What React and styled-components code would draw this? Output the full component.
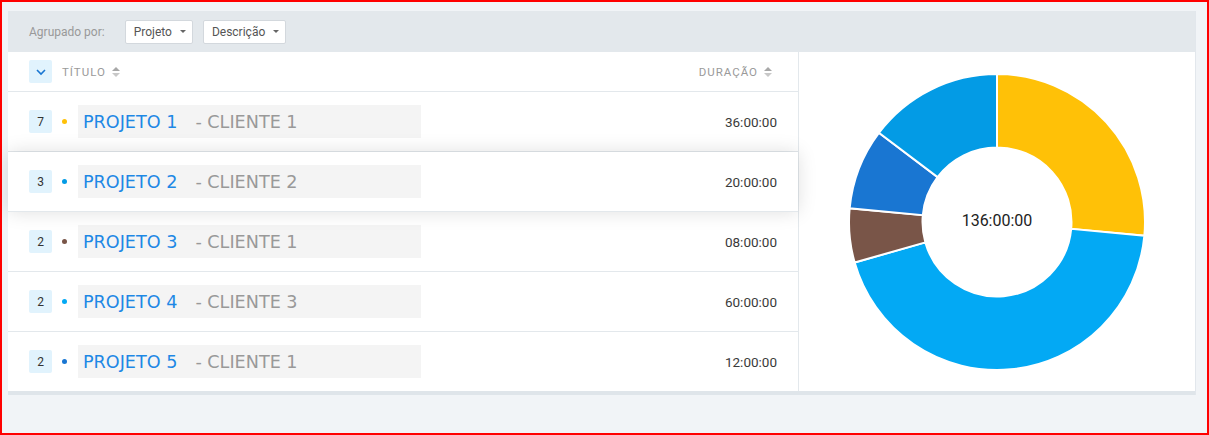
import React from 'react'
import styled, { createGlobalStyle } from 'styled-components'

const GlobalStyle = createGlobalStyle`
    html, body {
        margin: 0;
        padding: 0;
        background: #f1f4f7;
    }
    * { box-sizing: border-box; }
`;

const Frame = styled.div`
    width: 1209px;
    height: 435px;
    border: 2px solid #ff0000;
    background: #f1f4f7;
    padding: 9px 12px 0 6px;
    font-family: Roboto, "Liberation Sans", sans-serif;
`;

const Panel = styled.div`
    background: #fff;
    border-bottom: 4px solid #dfe5ea;
    box-shadow: 1px 0 0 #e2e7ec;
`;

const Toolbar = styled.div`
    height: 41px;
    background: #e3e8ec;
    display: flex;
    align-items: center;
    padding-left: 21px;
    gap: 10px;
`;

const Label = styled.span`
    font-size: 12px;
    color: #999;
    margin-right: 10px;
`;

const Select = styled.button`
    height: 24px;
    display: flex;
    align-items: center;
    gap: 8px;
    padding: 0 6px 0 8px;
    background: #fff;
    border: 1px solid #d3d8dd;
    border-radius: 2px;
    font-family: Roboto, "Liberation Sans", sans-serif;
    font-size: 12px;
    color: #555;
`;

const Caret = styled.span`
    width: 0;
    height: 0;
    border-left: 3px solid transparent;
    border-right: 3px solid transparent;
    border-top: 3px solid #666;
`;

const Body = styled.div`
    display: flex;
`;

const Table = styled.div`
    width: 791px;
    border-right: 1px solid #e3e8ec;
`;

const HeadRow = styled.div`
    height: 40px;
    display: flex;
    align-items: center;
    padding: 0 26px 0 21px;
    border-bottom: 1px solid #e3e8ec;
`;

const Square = styled.div`
    width: 23px;
    height: 23px;
    border-radius: 2px;
    background: #e1f3fd;
    display: flex;
    align-items: center;
    justify-content: center;
    font-size: 12px;
    color: #333;
    flex-shrink: 0;
`;

const ColTitle = styled.span`
    display: flex;
    align-items: center;
    gap: 6px;
    font-size: 11.5px;
    letter-spacing: 1px;
    color: #9a9a9a;
    margin-left: ${p => p.$left ? '10px' : 'auto'};
`;

const Row = styled.div`
    height: 60px;
    display: flex;
    align-items: center;
    padding: 0 21px;
    border-bottom: 1px solid #e3e8ec;
    background: #fff;
    position: relative;
    z-index: ${p => p.$hover ? 1 : 0};
    box-shadow: ${p => p.$hover ? '0 0 18px rgba(0,0,0,0.13)' : 'none'};
    &:last-child {
        height: 59px;
        border-bottom: none;
    }
`;

const Dot = styled.span`
    width: 5px;
    height: 5px;
    border-radius: 50%;
    background: ${p => p.$color};
    margin: 0 11px 0 10px;
    flex-shrink: 0;
`;

const NameBox = styled.div`
    width: 343px;
    height: 33px;
    background: #f4f4f4;
    display: flex;
    align-items: center;
    padding-left: 5px;
    font-family: "DejaVu Sans", Verdana, sans-serif;
    font-size: 17.6px;
`;

const Project = styled.span`
    color: #1e88e5;
    margin-right: 18px;
`;

const Client = styled.span`
    color: #999;
`;

const Duration = styled.span`
    margin-left: auto;
    font-size: 13.5px;
    color: #3a3a3a;
`;

const ChartArea = styled.div`
    flex: 1;
    display: flex;
    align-items: center;
    justify-content: center;
    height: 339px;
`;

const SortIcon = () => (
    <svg width="8" height="10" viewBox="0 0 8 10">
        <path d="M0 4 L4 0 L8 4 Z" fill="#a8a8a8" />
        <path d="M0 6 L4 10 L8 6 Z" fill="#c8c8c8" />
    </svg>
);

const Chevron = () => (
    <svg width="12" height="12" viewBox="0 0 12 12">
        <path d="M2 4 L6 8 L10 4" fill="none" stroke="#1976d2" strokeWidth="1.6" />
    </svg>
);

const projects = [
    { count: 7, name: 'PROJETO 1', client: 'CLIENTE 1', time: '36:00:00', hours: 36, color: '#ffc107' },
    { count: 3, name: 'PROJETO 2', client: 'CLIENTE 2', time: '20:00:00', hours: 20, color: '#039be5', hover: true },
    { count: 2, name: 'PROJETO 3', client: 'CLIENTE 1', time: '08:00:00', hours: 8, color: '#795548' },
    { count: 2, name: 'PROJETO 4', client: 'CLIENTE 3', time: '60:00:00', hours: 60, color: '#03a9f4' },
    { count: 2, name: 'PROJETO 5', client: 'CLIENTE 1', time: '12:00:00', hours: 12, color: '#1976d2' },
];

// clockwise slice order as drawn in the chart
const chartOrder = [0, 3, 2, 4, 1];

const Donut = () => {
    const cx = 150, cy = 150, R = 148, r = 74.5;
    const total = projects.reduce((s, p) => s + p.hours, 0);
    let acc = 0;
    const pt = (rad, a) => [cx + rad * Math.sin(a), cy - rad * Math.cos(a)];
    const slices = chartOrder.map(i => {
        const p = projects[i];
        const a0 = (acc / total) * Math.PI * 2;
        acc += p.hours;
        const a1 = (acc / total) * Math.PI * 2;
        const large = a1 - a0 > Math.PI ? 1 : 0;
        const [x0, y0] = pt(R, a0);
        const [x1, y1] = pt(R, a1);
        const [x2, y2] = pt(r, a1);
        const [x3, y3] = pt(r, a0);
        const d = `M${x0} ${y0} A${R} ${R} 0 ${large} 1 ${x1} ${y1} L${x2} ${y2} A${r} ${r} 0 ${large} 0 ${x3} ${y3} Z`;
        return <path key={i} d={d} fill={p.color} stroke="#fff" strokeWidth="2" />;
    });
    return (
        <svg width="300" height="300" viewBox="0 0 300 300">
            {slices}
            <text x={cx} y={cy + 4} textAnchor="middle" fontSize="16" fill="#222"
                fontFamily="Roboto, 'Liberation Sans', sans-serif">136:00:00</text>
        </svg>
    );
};

export const App = () => {
    return (
        <Frame>
            <GlobalStyle />
            <Panel>
                <Toolbar>
                    <Label>Agrupado por:</Label>
                    <Select>Projeto <Caret /></Select>
                    <Select>Descrição <Caret /></Select>
                </Toolbar>
                <Body>
                    <Table>
                        <HeadRow>
                            <Square><Chevron /></Square>
                            <ColTitle $left>TÍTULO <SortIcon /></ColTitle>
                            <ColTitle>DURAÇÃO <SortIcon /></ColTitle>
                        </HeadRow>
                        {projects.map(p => (
                            <Row key={p.name} $hover={p.hover}>
                                <Square>{p.count}</Square>
                                <Dot $color={p.color} />
                                <NameBox>
                                    <Project>{p.name}</Project>
                                    <Client>- {p.client}</Client>
                                </NameBox>
                                <Duration>{p.time}</Duration>
                            </Row>
                        ))}
                    </Table>
                    <ChartArea>
                        <Donut />
                    </ChartArea>
                </Body>
            </Panel>
        </Frame>
    );
}

export default App;
